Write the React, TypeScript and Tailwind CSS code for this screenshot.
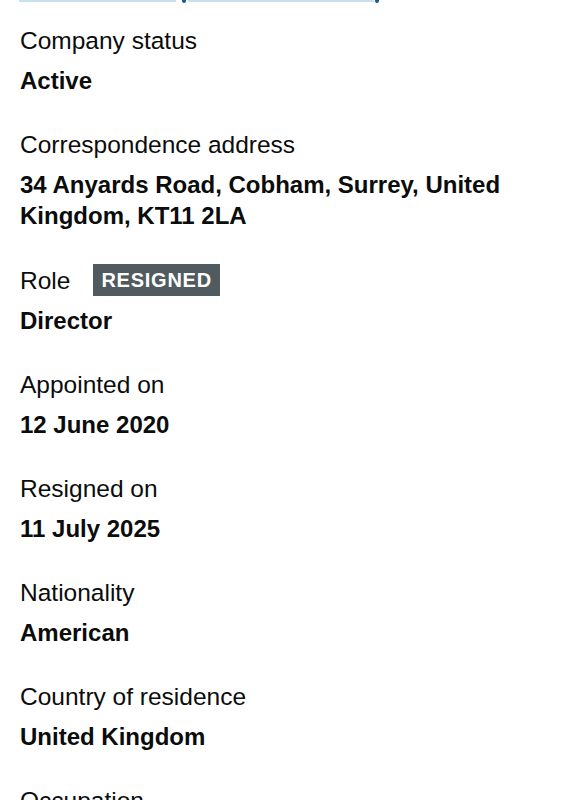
import React from 'react';

interface Row {
  label: string;
  value: string;
  tag?: string;
}

const rows: Row[] = [
  { label: 'Company status', value: 'Active' },
  { label: 'Correspondence address', value: '34 Anyards Road, Cobham, Surrey, United Kingdom, KT11 2LA' },
  { label: 'Role', value: 'Director', tag: 'RESIGNED' },
  { label: 'Appointed on', value: '12 June 2020' },
  { label: 'Resigned on', value: '11 July 2025' },
  { label: 'Nationality', value: 'American' },
  { label: 'Country of residence', value: 'United Kingdom' },
  { label: 'Occupation', value: 'Director' },
];

export default function App() {
  return (
    <div
      className="min-h-[800px] bg-white text-[#0b0c0c] overflow-hidden"
      style={{ fontFamily: '"Liberation Sans", Arial, sans-serif' }}
    >
      {/* tail of the links above, cut off by the scroll */}
      <div className="flex items-start h-[3px] pl-[19px]">
        <div className="w-[157px] h-[2px] bg-[#c9e0ee]" />
        <div className="w-[4px] h-[3px] ml-[6px] rounded-b-full bg-[#1d5a8e]" />
        <div className="w-[186px] h-[2px] ml-[2px] bg-[#c9e0ee]" />
        <div className="w-[4px] h-[3px] ml-[1px] rounded-b-full bg-[#1d5a8e]" />
      </div>

      <dl className="px-5 pt-[22px]">
        {rows.map((row) => (
          <div key={row.label} className="mb-[33px]">
            <dt className="flex items-center gap-[23px] text-[24.5px] leading-[31px] mb-[9px]">
              <span>{row.label}</span>
              {row.tag && (
                <span className="bg-[#505a5f] text-white font-bold text-[20px] leading-[32px] tracking-[0.75px] px-2">
                  {row.tag}
                </span>
              )}
            </dt>
            <dd className="text-[24px] leading-[31px] font-bold">{row.value}</dd>
          </div>
        ))}
      </dl>
    </div>
  );
}
